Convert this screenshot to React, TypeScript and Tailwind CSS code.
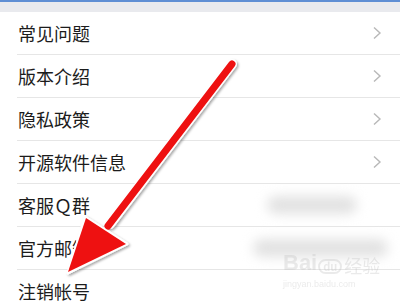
import React from 'react';

const rows = [
  { label: '常见问题', arrow: true },
  { label: '版本介绍', arrow: true },
  { label: '隐私政策', arrow: true },
  { label: '开源软件信息', arrow: true },
  { label: '客服Ｑ群', blur: 'w-[90px] left-[250px]' },
  { label: '官方邮箱', blur: 'w-[135px] left-[236px]' },
  { label: '注销帐号' },
];

const Chevron = () => (
  <svg width="10" height="14" viewBox="0 0 10 14" className="absolute right-[18px]">
    <polyline points="2,1.5 8,7 2,12.5" fill="none" stroke="#b8b8b8" strokeWidth="1.4" />
  </svg>
);

const RedArrow = () => (
  <svg width="400" height="306" viewBox="0 0 400 306" className="absolute left-0 top-0 pointer-events-none">
    <defs>
      <filter id="sh" x="-20%" y="-20%" width="140%" height="140%">
        <feDropShadow dx="1.5" dy="1.5" stdDeviation="1" floodColor="#000" floodOpacity="0.35" />
      </filter>
    </defs>
    <g filter="url(#sh)">
      <line x1="232" y1="64" x2="110" y2="224" stroke="#fff" strokeWidth="10" strokeLinecap="round" />
      <polygon points="85,217 68,273 127,244" fill="#fff" stroke="#fff" strokeWidth="3" strokeLinejoin="round" />
    </g>
    <line x1="232" y1="64" x2="108" y2="226" stroke="#ee1111" strokeWidth="7" strokeLinecap="round" />
    <polygon points="86,218 68,272 126,244" fill="#ee1111" />
  </svg>
);

export default function App() {
  return (
    <div className="relative w-[400px] h-[306px] overflow-hidden bg-white font-['Noto_Sans_CJK_SC','Noto_Sans',sans-serif]">
      <div className="h-[2px] bg-[#5f8fd4]" />
      <div className="h-[10px] bg-[#e9eaee]" />
      <div className="flex flex-col">
        {rows.map((r) => (
          <div key={r.label} className="relative h-[43px] ml-[17px] border-b border-[#e6e6e6] flex items-center">
            <span className="pl-px text-[18px] leading-none text-[#1c1c1c]">{r.label}</span>
            {r.arrow && <Chevron />}
            {r.blur && (
              <div className={`absolute top-[12px] h-[18px] rounded-full bg-[#e2e2e2] blur-[6px] ${r.blur}`} />
            )}
          </div>
        ))}
      </div>
      <div className="absolute left-[283px] top-[252px] flex flex-col items-start opacity-30 text-[#bcbcbc]">
        <div className="flex items-end leading-none">
          <span className="text-[22px] font-bold font-['Liberation_Sans',sans-serif]">Bai</span>
          <span className="ml-[1px] text-[11px] font-bold px-[3px] rounded-full border-2 border-[#bcbcbc]">du</span>
          <span className="ml-[2px] text-[18px]">经验</span>
        </div>
        <span className="mt-[4px] text-[9px] font-['Liberation_Sans',sans-serif]">jingyan.baidu.com</span>
      </div>
      <RedArrow />
    </div>
  );
}
